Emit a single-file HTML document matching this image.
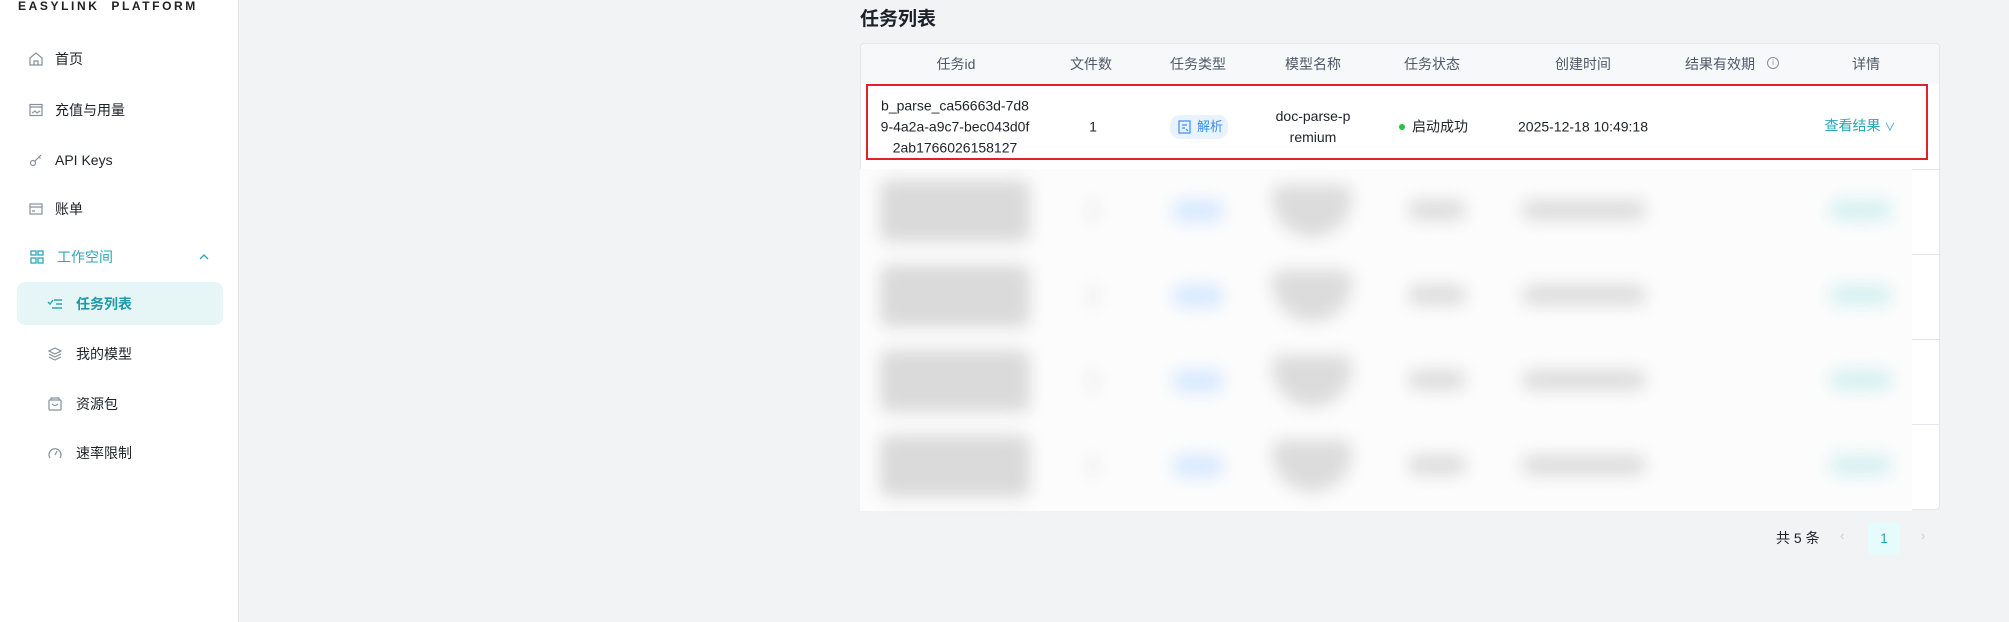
<!DOCTYPE html>
<html><head><meta charset="utf-8"><style>
*{margin:0;padding:0;box-sizing:border-box}
body{width:2009px;height:622px;overflow:hidden;background:#f2f3f5;font-family:"Liberation Sans","Noto Sans CJK SC",sans-serif;color:#1d2129;position:relative}
.side{position:absolute;left:0;top:0;width:239px;height:622px;background:#fff;border-right:1px solid #e5e6eb}
.logo{position:absolute;left:18px;top:-1px;font-size:12px;letter-spacing:2.6px;font-weight:bold;color:#222;white-space:nowrap}
.mi{position:absolute;left:0;width:239px;height:38px;font-size:14px;color:#1d2129;display:flex;align-items:center}
.mi svg{position:absolute}
.mi span{position:absolute}
.act{position:absolute;left:17px;top:282px;width:206px;height:43px;background:#e6f6f7;border-radius:8px}
.abs{position:absolute}
.table{position:absolute;left:860px;top:43px;width:1080px;height:467px;background:#fff;border:1px solid #e5e6eb;border-radius:4px}
.th{position:absolute;top:44px;height:40px;line-height:40px;font-size:14px;color:#4e5969;transform:translateX(-50%);white-space:nowrap}
.cell{position:absolute;font-size:14px;color:#1d2129;transform:translate(-50%,-50%);text-align:center;line-height:21px;white-space:nowrap}
.blob{position:absolute;filter:blur(8px);border-radius:10px}
</style></head><body>
<div class="side">
<div class="logo">EASYLINK&nbsp; PLATFORM</div>
<div class="mi" style="top:40px"><svg style="left:28px" width="16" height="16" viewBox="0 0 16 16" fill="none" stroke="#86909c" stroke-width="1.2"><path d="M2 7L8 2l6 5v7H2z"/><path d="M6 14v-4h4v4"/></svg><span style="left:55px">首页</span></div>
<div class="mi" style="top:91px"><svg style="left:28px" width="16" height="16" viewBox="0 0 16 16" fill="none" stroke="#86909c" stroke-width="1.2"><rect x="2" y="2.5" width="12" height="11"/><path d="M2 5h12M4 11l3-2 2 2 3-2"/></svg><span style="left:55px">充值与用量</span></div>
<div class="mi" style="top:141px"><svg style="left:28px" width="16" height="16" viewBox="0 0 16 16" fill="none" stroke="#86909c" stroke-width="1.2"><circle cx="5" cy="11" r="2.5"/><path d="M7 9l6-6M11 5l1.5 1.5"/></svg><span style="left:55px">API Keys</span></div>
<div class="mi" style="top:190px"><svg style="left:28px" width="16" height="16" viewBox="0 0 16 16" fill="none" stroke="#86909c" stroke-width="1.2"><rect x="2" y="3" width="12" height="10"/><path d="M2 6h12M4 10h3"/></svg><span style="left:55px">账单</span></div>
<div class="mi" style="top:238px;color:#2aa6b8"><svg style="left:29px" width="16" height="16" viewBox="0 0 16 16" fill="none" stroke="#2aa6b8" stroke-width="1.3"><rect x="2" y="2" width="5" height="4"/><rect x="9" y="2" width="5" height="4"/><rect x="2" y="9" width="5" height="5"/><rect x="9" y="9" width="5" height="5"/></svg><span style="left:57px">工作空间</span><svg style="left:198px" width="12" height="8" viewBox="0 0 12 8" fill="none" stroke="#2aa6b8" stroke-width="1.3"><path d="M2 6l4-4 4 4"/></svg></div>
<div class="act"></div>
<div class="mi" style="top:285px;color:#1e9aa8;font-weight:bold"><svg style="left:47px" width="16" height="16" viewBox="0 0 16 16" fill="none" stroke="#2aa6b8" stroke-width="1.4"><path d="M1 6l2 2 3-4M7 4h8M9 8h6M5 12h10"/></svg><span style="left:76px">任务列表</span></div>
<div class="mi" style="top:335px"><svg style="left:47px" width="16" height="16" viewBox="0 0 16 16" fill="none" stroke="#86909c" stroke-width="1.2"><path d="M8 2l6 3-6 3-6-3z"/><path d="M2 8l6 3 6-3M2 11l6 3 6-3"/></svg><span style="left:76px">我的模型</span></div>
<div class="mi" style="top:385px"><svg style="left:47px" width="16" height="16" viewBox="0 0 16 16" fill="none" stroke="#86909c" stroke-width="1.2"><rect x="2" y="4" width="12" height="10" rx="1"/><path d="M4 4V2h8v2M5 8q3 3 6 0"/></svg><span style="left:76px">资源包</span></div>
<div class="mi" style="top:434px"><svg style="left:47px" width="16" height="16" viewBox="0 0 16 16" fill="none" stroke="#86909c" stroke-width="1.2"><path d="M3 13A6 6 0 1 1 13 13"/><path d="M8 10l2-4"/></svg><span style="left:76px">速率限制</span></div>
</div>

<div class="abs" style="left:860px;top:4px;font-size:19px;font-weight:bold;color:#1d2129">任务列表</div>
<div class="table">
<div class="abs" style="left:0;top:0;width:1078px;height:40px;background:#f7f8fa;border-radius:4px 4px 0 0"></div>
<div class="abs" style="left:0;top:125px;width:1078px;height:1px;background:#e5e6eb"></div>
<div class="abs" style="left:1050px;top:210px;width:28px;height:1px;background:#e5e6eb"></div>
<div class="abs" style="left:1050px;top:295px;width:28px;height:1px;background:#e5e6eb"></div>
<div class="abs" style="left:1050px;top:380px;width:28px;height:1px;background:#e5e6eb"></div>
</div>
<div class="th" style="left:956px">任务id</div>
<div class="th" style="left:1091px">文件数</div>
<div class="th" style="left:1198px">任务类型</div>
<div class="th" style="left:1313px">模型名称</div>
<div class="th" style="left:1432px">任务状态</div>
<div class="th" style="left:1583px">创建时间</div>
<div class="th" style="left:1720px">结果有效期</div>
<div class="abs" style="left:1767px;top:57px;width:12px;height:12px;border:1px solid #86909c;border-radius:50%;font-size:8px;color:#86909c;text-align:center;line-height:10px">i</div>
<div class="th" style="left:1866px">详情</div>

<div class="abs" style="left:866px;top:84px;width:1062px;height:76px;border:2px solid #e0202a"></div>
<div class="cell" style="left:955px;top:127px">b_parse_ca56663d-7d8<br>9-4a2a-a9c7-bec043d0f<br>2ab1766026158127</div>
<div class="cell" style="left:1093px;top:127px">1</div>
<div class="abs" style="left:1170px;top:115px;width:58px;height:24px;background:#e8f3ff;border-radius:10px;font-size:13px;color:#3c8cf0;line-height:24px;padding-left:27px">解析</div>
<svg class="abs" style="left:1178px;top:120px" width="13" height="14" viewBox="0 0 13 14" fill="none" stroke="#3c8cf0" stroke-width="1.2"><rect x="1" y="1" width="11" height="12"/><path d="M4 5h5M4 8h3M8 9l2 2"/></svg>
<div class="cell" style="left:1313px;top:127px">doc-parse-p<br>remium</div>
<div class="abs" style="left:1399px;top:124px;width:6px;height:6px;border-radius:50%;background:#23c343"></div>
<div class="cell" style="left:1440px;top:127px">启动成功</div>
<div class="cell" style="left:1583px;top:127px">2025-12-18 10:49:18</div>
<div class="cell" style="left:1860px;top:127px;color:#2aa6b8">查看结果 <span style="font-size:11px">∨</span></div>

<div class="abs" style="left:860px;top:169px;width:1052px;height:342px;background:#fcfcfc"></div>
<div class="blob" style="left:880px;top:180px;width:150px;height:62px;background:#dadada"></div>
<div class="blob" style="left:880px;top:265px;width:150px;height:62px;background:#dadada"></div>
<div class="blob" style="left:880px;top:350px;width:150px;height:62px;background:#dadada"></div>
<div class="blob" style="left:880px;top:435px;width:150px;height:62px;background:#dadada"></div>
<div class="blob" style="left:1088px;top:200px;width:10px;height:22px;background:#eee"></div>
<div class="blob" style="left:1088px;top:285px;width:10px;height:22px;background:#eee"></div>
<div class="blob" style="left:1088px;top:370px;width:10px;height:22px;background:#eee"></div>
<div class="blob" style="left:1088px;top:455px;width:10px;height:22px;background:#eee"></div>
<div class="blob" style="left:1173px;top:200px;width:50px;height:22px;background:#d6e8ff"></div>
<div class="blob" style="left:1173px;top:285px;width:50px;height:22px;background:#d6e8ff"></div>
<div class="blob" style="left:1173px;top:370px;width:50px;height:22px;background:#d6e8ff"></div>
<div class="blob" style="left:1173px;top:455px;width:50px;height:22px;background:#d6e8ff"></div>
<div class="blob" style="left:1272px;top:185px;width:80px;height:52px;background:#dcdcdc;border-radius:10px 10px 40px 40px"></div>
<div class="blob" style="left:1272px;top:270px;width:80px;height:52px;background:#dcdcdc;border-radius:10px 10px 40px 40px"></div>
<div class="blob" style="left:1272px;top:355px;width:80px;height:52px;background:#dcdcdc;border-radius:10px 10px 40px 40px"></div>
<div class="blob" style="left:1272px;top:440px;width:80px;height:52px;background:#dcdcdc;border-radius:10px 10px 40px 40px"></div>
<div class="blob" style="left:1408px;top:200px;width:58px;height:20px;background:#dcdcdc"></div>
<div class="blob" style="left:1408px;top:285px;width:58px;height:20px;background:#dcdcdc"></div>
<div class="blob" style="left:1408px;top:370px;width:58px;height:20px;background:#dcdcdc"></div>
<div class="blob" style="left:1408px;top:455px;width:58px;height:20px;background:#dcdcdc"></div>
<div class="blob" style="left:1522px;top:200px;width:124px;height:20px;background:#dcdcdc"></div>
<div class="blob" style="left:1522px;top:285px;width:124px;height:20px;background:#dcdcdc"></div>
<div class="blob" style="left:1522px;top:370px;width:124px;height:20px;background:#dcdcdc"></div>
<div class="blob" style="left:1522px;top:455px;width:124px;height:20px;background:#dcdcdc"></div>
<div class="blob" style="left:1830px;top:200px;width:62px;height:20px;background:#d4f0f0"></div>
<div class="blob" style="left:1830px;top:285px;width:62px;height:20px;background:#d4f0f0"></div>
<div class="blob" style="left:1830px;top:370px;width:62px;height:20px;background:#d4f0f0"></div>
<div class="blob" style="left:1830px;top:455px;width:62px;height:20px;background:#d4f0f0"></div>

<div class="abs" style="left:1776px;top:528px;font-size:14px;color:#1d2129">共 5 条</div>
<div class="abs" style="left:1840px;top:528px;font-size:13px;color:#c9cdd4">‹</div>
<div class="abs" style="left:1868px;top:522px;width:32px;height:32px;background:#e6fbfb;color:#2aa6b8;font-size:14px;text-align:center;line-height:32px">1</div>
<div class="abs" style="left:1921px;top:528px;font-size:13px;color:#c9cdd4">›</div>
</body></html>
